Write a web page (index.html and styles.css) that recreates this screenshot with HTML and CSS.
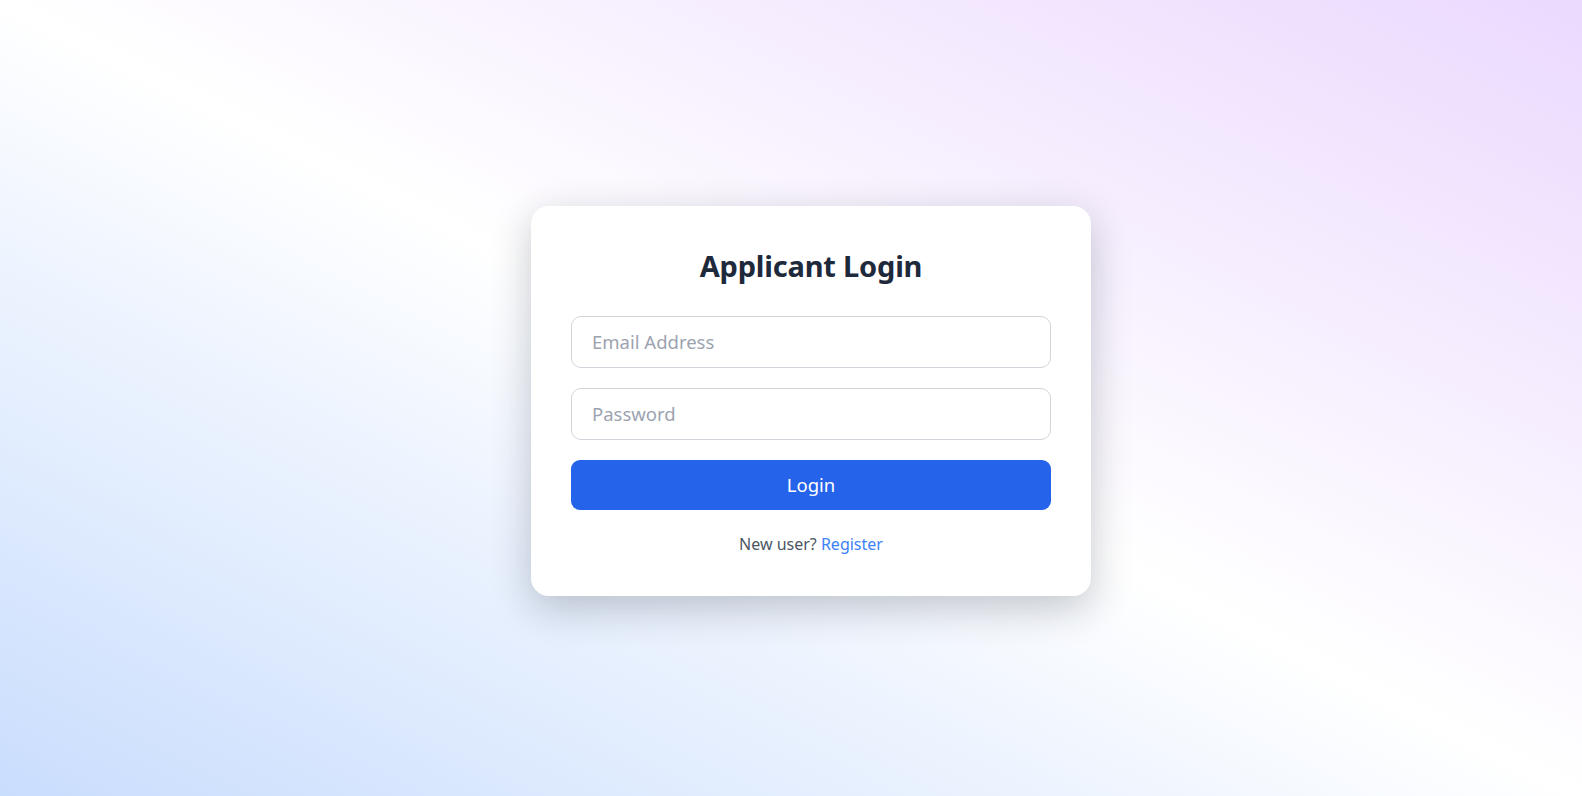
FILE: index.html
```html
<!DOCTYPE html>
<html lang="en">
<head>
<meta charset="utf-8">
<title>Applicant Login</title>
<link rel="stylesheet" href="styles.css">
</head>
<body>
<main class="page">
  <form class="card">
    <h1 class="title">Applicant Login</h1>
    <input class="field" type="email" placeholder="Email Address">
    <input class="field" type="password" placeholder="Password">
    <button class="btn" type="button">Login</button>
    <p class="footer">New user? <a class="link" href="#">Register</a></p>
  </form>
</main>
</body>
</html>
```
FILE: styles.css
```css
* { box-sizing: border-box; }
html, body { margin: 0; height: 100%; }
body {
  font-family: "Noto Sans", "Open Sans", sans-serif;
  background: linear-gradient(to top right, #c9ddfd 0%, #ffffff 50%, #ebd9fe 100%);
}
.page {
  min-height: 100vh;
  display: flex;
  align-items: center;
  justify-content: center;
  padding: 5px 0 0 40px;
}
.card {
  width: 560px;
  background: #fff;
  border-radius: 18px;
  padding: 40px 40px 40px;
  box-shadow: 0 12px 40px rgba(15, 23, 42, 0.24);
  display: flex;
  flex-direction: column;
}
.title {
  margin: 0 0 30px;
  text-align: center;
  font-size: 29px;
  line-height: 40px;
  letter-spacing: -0.2px;
  font-weight: 700;
  color: #1e293b;
}
.field {
  height: 52px;
  border: 1px solid #d1d5db;
  border-radius: 10px;
  padding: 0 20px;
  font-family: inherit;
  font-size: 18.5px;
  color: #111827;
  margin-bottom: 20px;
  outline: none;
}
.field::placeholder { color: #9ca3af; }
.btn {
  height: 50px;
  border: none;
  border-radius: 9px;
  background: #2563eb;
  color: #fff;
  font-family: inherit;
  font-size: 18.5px;
  cursor: pointer;
}
.footer {
  margin: 22px 0 0;
  text-align: center;
  font-size: 16px;
  line-height: 24px;
  color: #4b5563;
}
.link { color: #3b82f6; text-decoration: none; }
```
